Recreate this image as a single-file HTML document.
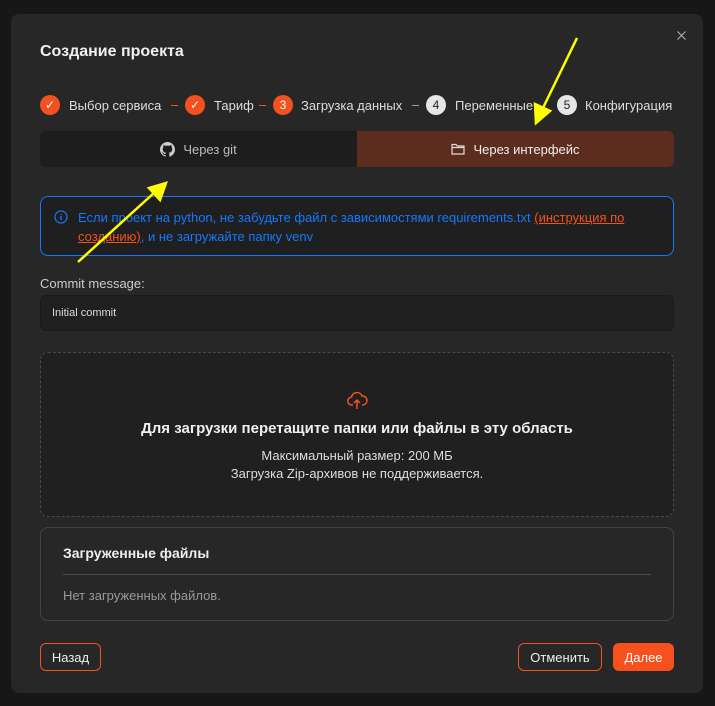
<!DOCTYPE html>
<html><head><meta charset="utf-8"><style>
*{box-sizing:border-box;margin:0;padding:0}
body{width:715px;height:706px;background:#171717;font-family:"Liberation Sans",sans-serif;color:#e8e8e8;position:relative;overflow:hidden;font-size:13px}
.modal{position:absolute;left:11px;top:14px;width:692px;height:679px;background:#272727;border-radius:8px}
.abs{position:absolute}
.title{left:40px;top:43px;font-size:16px;font-weight:bold;color:#f0f0f0}
.c{position:absolute;width:20px;height:20px;border-radius:50%;top:95px;text-align:center;line-height:20px;font-size:12px}
.o{background:#f4511e;color:#fff}
.w{background:#e6e6e6;color:#222}
.lbl{position:absolute;top:98px;font-size:13px;color:#ddd}
.dash{position:absolute;top:105px;width:7px;height:1px}
.tabs{left:40px;top:131px;width:634px;height:36px;border-radius:6px;overflow:hidden;display:flex}
.tabs div{flex:1;display:flex;align-items:center;justify-content:center;gap:8px;font-size:13px}
.info{left:40px;top:196px;width:634px;height:60px;border:1px solid #1677ff;border-radius:8px;background:#1f1f1f;padding:11px 12px 0 37px;color:#1677ff;font-size:13px;line-height:19px}
.info a{color:#f4511e;text-decoration:underline}
.inp{left:40px;top:295px;width:634px;height:36px;border:1px solid #1a1a1a;background:#202020;border-radius:6px;padding:11px 11px;font-size:11px;color:#ddd}
.drop{left:40px;top:352px;width:634px;height:165px;border:1px dashed #4a4a4a;border-radius:8px;background:#202020;text-align:center}
.files{left:40px;top:527px;width:634px;height:94px;border:1px solid #444;border-radius:8px}
.btn{position:absolute;top:643px;height:28px;border-radius:6px;font-size:13px;display:flex;align-items:center;justify-content:center}
</style></head><body>
<div class="modal"></div>
<div class="abs title">Создание проекта</div>
<svg class="abs" style="left:677px;top:31px" width="9" height="9" viewBox="0 0 9 9"><path d="M0.5 0.5l8 8M8.5 0.5l-8 8" stroke="#aaa" stroke-width="1.2"/></svg>

<div class="c o" style="left:40px">✓</div><div class="lbl" style="left:69px">Выбор сервиса</div>
<div class="dash" style="left:171px;background:#f4511e"></div>
<div class="c o" style="left:185px">✓</div><div class="lbl" style="left:214px">Тариф</div>
<div class="dash" style="left:259px;background:#f4511e"></div>
<div class="c o" style="left:273px">3</div><div class="lbl" style="left:301px">Загрузка данных</div>
<div class="dash" style="left:412px;background:#999"></div>
<div class="c w" style="left:426px">4</div><div class="lbl" style="left:455px">Переменные</div>
<div class="c w" style="left:557px">5</div><div class="lbl" style="left:585px">Конфигурация</div>

<div class="abs tabs">
<div style="background:#1d1d1d;color:#bbb"><svg width="15" height="15" viewBox="0 0 16 16"><path fill="#ccc" d="M8 0C3.6 0 0 3.6 0 8c0 3.5 2.3 6.5 5.5 7.6.4.1.5-.2.5-.4v-1.4c-2.2.5-2.7-1-2.7-1-.4-.9-.9-1.2-.9-1.2-.7-.5.1-.5.1-.5.8.1 1.2.8 1.2.8.7 1.3 1.9.9 2.3.7.1-.5.3-.9.5-1.1-1.8-.2-3.600-.9-3.6-4 0-.9.3-1.6.8-2.1-.1-.2-.4-1 .1-2.1 0 0 .7-.2 2.2.8.6-.2 1.3-.3 2-.3s1.4.1 2 .3c1.5-1 2.2-.8 2.2-.8.4 1.1.2 1.9.1 2.1.5.6.8 1.3.8 2.1 0 3.1-1.9 3.8-3.7 4 .3.3.6.8.6 1.5v2.2c0 .2.1.5.6.4C13.7 14.5 16 11.5 16 8c0-4.4-3.6-8-8-8z"/></svg>Через git</div>
<div style="background:#5c2d1e;color:#eee"><svg width="14" height="12" viewBox="0 0 14 12"><path d="M1 1.5h4l1.5 1.5H13v8H1z M1 4.5h12" fill="none" stroke="#ddd" stroke-width="1.2"/></svg>Через интерфейс</div>
</div>

<div class="abs info"><svg class="abs" style="left:13px;top:13px" width="14" height="14" viewBox="0 0 14 14"><circle cx="7" cy="7" r="6" fill="none" stroke="#1677ff" stroke-width="1.2"/><path d="M7 6v4M7 4v1" stroke="#1677ff" stroke-width="1.3"/></svg>Если проект на python, не забудьте файл с зависимостями requirements.txt <a>(инструкция по созданию)</a>, и не загружайте папку venv</div>

<div class="abs" style="left:40px;top:276px;font-size:13px;color:#ccc">Commit message:</div>
<div class="abs inp">Initial commit</div>

<div class="abs drop">
<svg style="margin-top:37px" width="22" height="20" viewBox="0 0 22 20"><path d="M7 15H6a4 4 0 0 1-.5-8A5.5 5.5 0 0 1 16 6a4.5 4.5 0 0 1 1 9h-1" fill="none" stroke="#f4511e" stroke-width="1.5"/><path d="M11 19v-9M8 13l3-3 3 3" fill="none" stroke="#f4511e" stroke-width="1.5"/></svg>
<div style="font-size:15px;font-weight:bold;color:#f0f0f0;margin-top:7px">Для загрузки перетащите папки или файлы в эту область</div>
<div style="margin-top:10px;color:#ddd;line-height:18px">Максимальный размер: 200 МБ<br>Загрузка Zip-архивов не поддерживается.</div>
</div>

<div class="abs files">
<div class="abs" style="left:22px;top:17px;font-size:14px;font-weight:bold;color:#eee">Загруженные файлы</div>
<div class="abs" style="left:22px;top:46px;width:588px;height:1px;background:#4a4a4a"></div>
<div class="abs" style="left:22px;top:60px;color:#999">Нет загруженных файлов.</div>
</div>

<div class="btn" style="left:40px;width:61px;border:1px solid #f4511e;color:#eee">Назад</div>
<div class="btn" style="left:518px;width:84px;border:1px solid #f4511e;color:#eee">Отменить</div>
<div class="btn" style="left:613px;width:61px;background:#f4511e;color:#fff">Далее</div>

<svg class="abs" style="left:0;top:0" width="715" height="706"><g stroke="#ffff00" stroke-width="2.5" fill="#ffff00"><line x1="577" y1="38" x2="542" y2="110"/><polygon points="536,123 535,104 550,111"/><line x1="78" y1="262" x2="155" y2="192"/><polygon points="166,183 160,200 149,188"/></g></svg>
</body></html>
